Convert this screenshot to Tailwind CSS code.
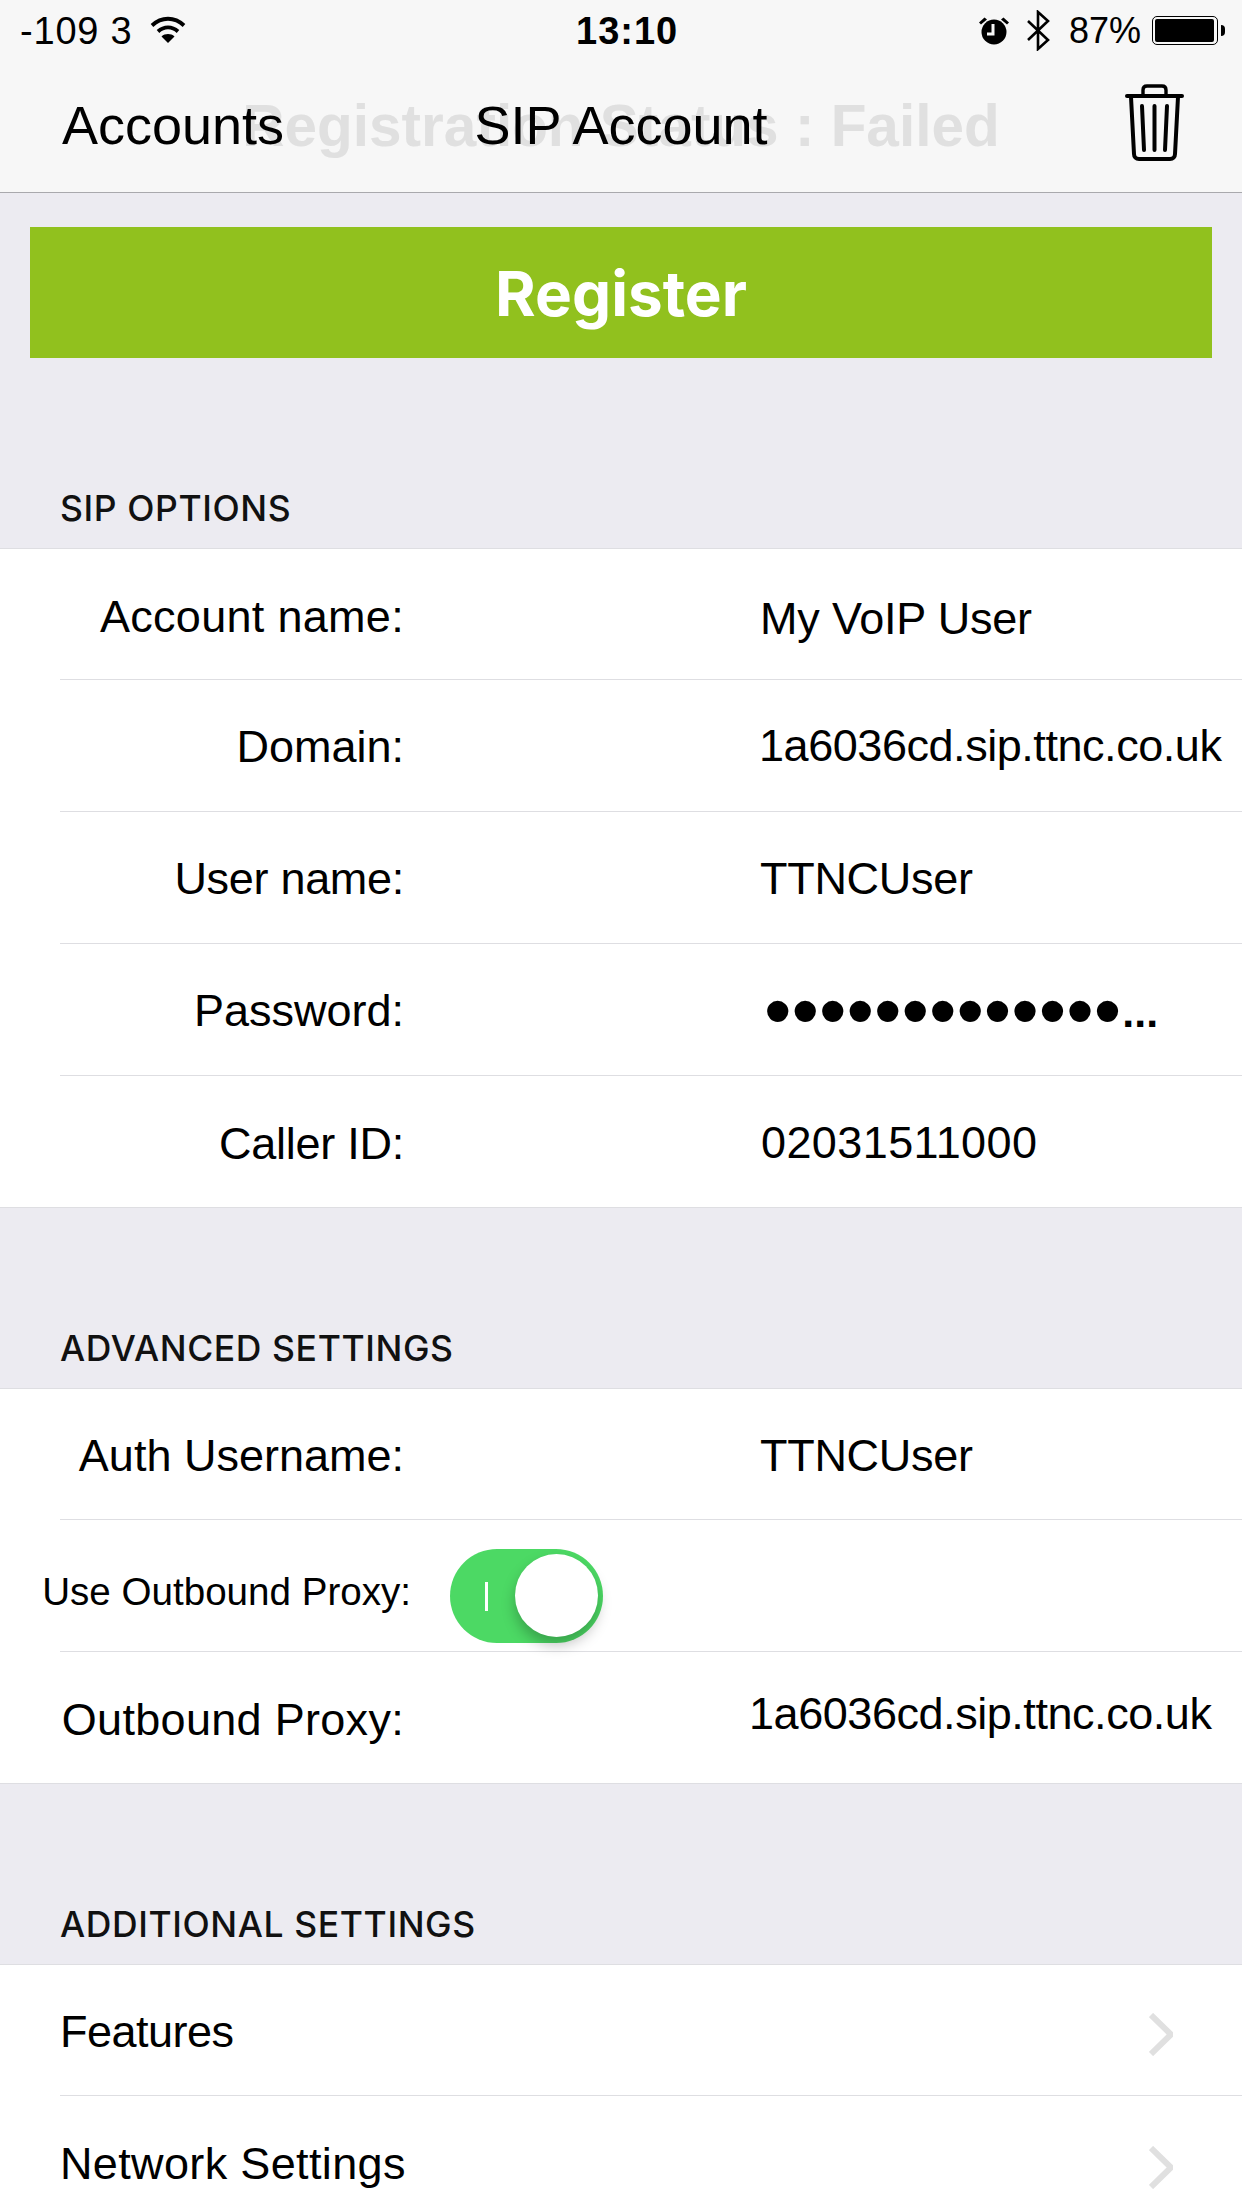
<!DOCTYPE html>
<html lang="en">
<head>
  <meta charset="UTF-8" />
  <title>SIP Account</title>
  <script src="https://cdn.jsdelivr.net/npm/@tailwindcss/browser@4"></script>
</head>
<body class="w-[1242px] h-[2208px] overflow-hidden bg-[#ecebf1] font-['Liberation_Sans',Arial,sans-serif] text-black">

  <!-- status + nav -->
  <header class="relative h-[193px] bg-[#f7f7f7] border-b border-[#a9a9ad]">
    <div class="relative h-[62px] text-[36px] leading-[62px]">
      <span class="absolute left-[20px] top-0 text-[38px] tracking-[0.8px]">-109 3</span>
      <svg class="absolute left-[150px] top-[16px] w-[36px] h-[27px]" viewBox="0 0 36 27" fill="none" stroke="black" stroke-width="3.8">
        <path d="M2 9.5C11.5 0.5 24.5 0.5 34 9.5" />
        <path d="M8 15.5C14 10 22 10 28 15.5" />
        <path d="M18 27L11.5 20.5C15 17.3 21 17.3 24.5 20.5Z" fill="black" stroke="none" />
      </svg>
      <span class="absolute left-[576px] top-0 text-[38px] font-bold tracking-[1px]">13:10</span>
      <svg class="absolute left-[978px] top-[16px] w-[32px] h-[29px]" viewBox="0 0 32 29">
        <circle cx="16" cy="16" r="12.5" fill="black" />
        <path d="M1 6.5L6.5 1.5L9 3.5L3 8.5ZM31 6.5L25.5 1.5L23 3.5L29 8.5Z" fill="black" />
        <path d="M15 8V18H9" fill="none" stroke="#f7f7f7" stroke-width="3" />
      </svg>
      <svg class="absolute left-[1026px] top-[10px] w-[25px] h-[41px]" viewBox="0 0 25 41" fill="none" stroke="black" stroke-width="2.6">
        <path d="M2 11L22 30L12 39V2L22 11L2 30" />
      </svg>
      <span class="absolute left-[1069px] top-0">87%</span>
      <div class="absolute left-[1152px] top-[16px] w-[66px] h-[29px] rounded-[5px] border border-black p-[2px]">
        <div class="w-[59px] h-full rounded-[2px] bg-black"></div>
      </div>
      <div class="absolute left-[1221px] top-[25px] w-[4px] h-[11px] rounded-r-full bg-black"></div>
    </div>
    <div class="relative h-[130px]">
      <span class="absolute left-0 right-0 top-[28px] text-center text-[58.5px] leading-[72px] font-bold text-[#e0e0e0] whitespace-nowrap">Registration Status : Failed</span>
      <span class="absolute left-[62px] top-[27px] text-[54px] leading-[72px]">Accounts</span>
      <span class="absolute left-0 right-0 top-[27px] text-center text-[54px] leading-[72px]">SIP Account</span>
      <svg class="absolute left-[1125px] top-[22px] w-[59px] h-[77px]" viewBox="0 0 59 77" fill="none" stroke="black" stroke-linecap="round">
        <path d="M2 12H57" stroke-width="4" />
        <path d="M18 11V6C18 3 20 2 22 2H37C39 2 41 3 41 6V11" stroke-width="3.4" />
        <path d="M6 13L9 70C9 73 11 75 14 75H45C48 75 50 73 50 70L53 13" stroke-width="4" />
        <path d="M17 22L19 66M29.5 22V66M42 22L40 66" stroke-width="4" />
      </svg>
    </div>
  </header>

  <button class="block ml-[30px] mt-[34px] w-[1182px] h-[131px] pt-[2px] bg-[#91c11e] text-white text-[62px] font-bold font-['Inter',sans-serif]">Register</button>

  <!-- sip options -->
  <h2 class="h-[190px] pl-[60px] pb-[19px] flex items-end text-[35.5px] leading-[40px] tracking-[0.6px] font-medium font-['Inter',sans-serif] text-[#111]">SIP OPTIONS</h2>
  <section class="bg-white border-t border-b border-[#dedee2]">
    <div class="h-[131px] ml-[60px] border-b border-[#dedee2] grid grid-cols-[344px_1fr] items-center text-[45px]">
      <span class="pt-[5px] text-right tracking-[0.3px]">Account name:</span>
      <span class="pl-[356px] pt-[9px] whitespace-nowrap tracking-[-0.2px]">My VoIP User</span>
    </div>
    <div class="h-[132px] ml-[60px] border-b border-[#dedee2] grid grid-cols-[344px_1fr] items-center text-[45px]">
      <span class="pt-[3px] text-right">Domain:</span>
      <span class="pl-[355px] whitespace-nowrap tracking-[-0.45px]">1a6036cd.sip.ttnc.co.uk</span>
    </div>
    <div class="h-[132px] ml-[60px] border-b border-[#dedee2] grid grid-cols-[344px_1fr] items-center text-[45px]">
      <span class="pt-[3px] text-right tracking-[-0.3px]">User name:</span>
      <span class="pl-[356px] pt-[3px] whitespace-nowrap tracking-[-0.3px]">TTNCUser</span>
    </div>
    <div class="h-[132px] ml-[60px] border-b border-[#dedee2] grid grid-cols-[344px_1fr] items-center text-[45px]">
      <span class="pt-[3px] text-right">Password:</span>
      <span class="pl-[360px] h-[60px] flex items-center whitespace-nowrap"><span class="text-[78.5px] leading-[60px]">•••••••••••••</span><span class="text-[43px] font-bold leading-[60px] ml-[1px] mt-[4px]">...</span></span>
    </div>
    <div class="h-[131px] ml-[60px] grid grid-cols-[344px_1fr] items-center text-[45px]">
      <span class="pt-[4px] text-right tracking-[-0.25px]">Caller ID:</span>
      <span class="pl-[357px] pt-[3px] whitespace-nowrap tracking-[0.4px]">02031511000</span>
    </div>
  </section>

  <!-- advanced settings -->
  <h2 class="h-[180px] pl-[60px] pb-[19px] flex items-end text-[35.5px] leading-[40px] tracking-[0.6px] font-medium font-['Inter',sans-serif] text-[#111]">ADVANCED SETTINGS</h2>
  <section class="bg-white border-t border-b border-[#dedee2]">
    <div class="h-[131px] ml-[60px] border-b border-[#dedee2] grid grid-cols-[344px_1fr] items-center text-[45px]">
      <span class="pt-[3px] text-right">Auth Username:</span>
      <span class="pl-[356px] pt-[3px] whitespace-nowrap tracking-[-0.3px]">TTNCUser</span>
    </div>
    <div class="h-[132px] ml-[60px] border-b border-[#dedee2] flex items-center">
      <span class="-ml-[18px] w-[369px] pt-[12px] text-right text-[38.6px] whitespace-nowrap">Use Outbound Proxy:</span>
      <div class="relative ml-[39px] mt-[21px] w-[153px] h-[94px] rounded-full bg-[#4cd964]">
        <div class="absolute left-[35px] top-[33px] w-[3px] h-[29px] bg-white"></div>
        <div class="absolute left-[65px] top-[5px] w-[83px] h-[83px] rounded-full bg-white shadow-[0_8px_14px_rgba(0,0,0,0.25)]"></div>
      </div>
    </div>
    <div class="h-[131px] ml-[60px] grid grid-cols-[344px_1fr] items-center text-[45px]">
      <span class="pt-[4px] text-right tracking-[0.3px]">Outbound Proxy:</span>
      <span class="pl-[345px] pb-[8px] whitespace-nowrap tracking-[-0.45px]">1a6036cd.sip.ttnc.co.uk</span>
    </div>
  </section>

  <!-- additional settings -->
  <h2 class="h-[180px] pl-[60px] pb-[19px] flex items-end text-[35.5px] leading-[40px] tracking-[0.6px] font-medium font-['Inter',sans-serif] text-[#111]">ADDITIONAL SETTINGS</h2>
  <section class="bg-white border-t border-[#dedee2]">
    <div class="h-[131px] ml-[60px] pr-[69px] border-b border-[#dedee2] flex items-center justify-between text-[45px]">
      <span class="pt-[3px] tracking-[-0.5px]">Features</span>
      <svg class="w-[24px] h-[43px] mt-[9px]" viewBox="0 0 24 43" fill="none" stroke="#e0e0e0" stroke-width="6"><path d="M2 2L22 21.5L2 41" /></svg>
    </div>
    <div class="h-[132px] ml-[60px] pr-[69px] flex items-center justify-between text-[45px]">
      <span class="pt-[3px] tracking-[0.35px]">Network Settings</span>
      <svg class="w-[24px] h-[43px] mt-[10px]" viewBox="0 0 24 43" fill="none" stroke="#e0e0e0" stroke-width="6"><path d="M2 2L22 21.5L2 41" /></svg>
    </div>
  </section>
</body>
</html>
